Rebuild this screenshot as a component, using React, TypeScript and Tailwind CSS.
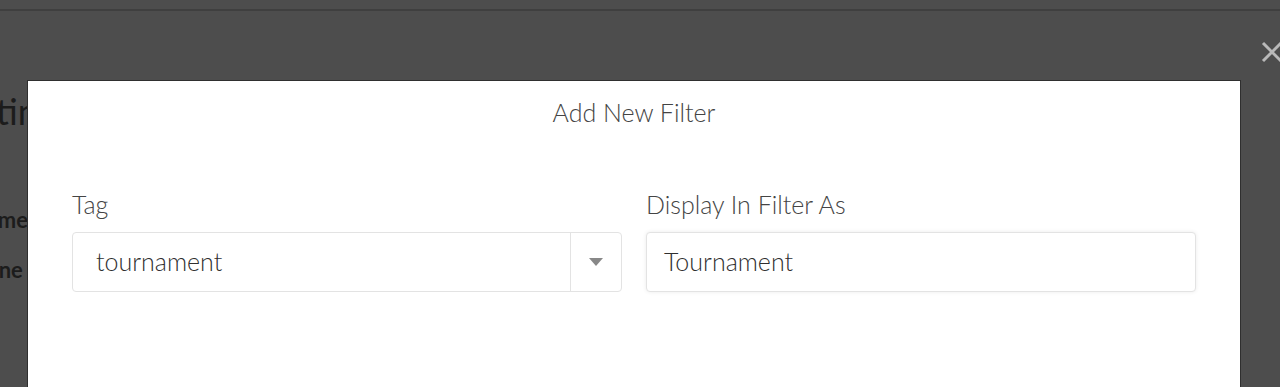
export default function App() {
  return (
    <div className="relative h-[387px] w-[1280px] overflow-hidden bg-[#4d4d4d] font-['Lato','Noto_Sans',sans-serif]">
      {/* page behind the overlay */}
      <div className="h-[9px]" />
      <div className="h-[2px] bg-[#3f3f3f]" />
      <div className="pt-[80px] text-[#1c1c1c]">
        <div className="ml-[-54px] whitespace-nowrap text-[36px] leading-[40px]">Setting</div>
        <div className="ml-[-30px] mt-[75px] whitespace-nowrap text-[22px] font-bold leading-[28px]">Name</div>
        <div className="ml-[-40px] mt-[22px] whitespace-nowrap text-[22px] font-bold leading-[28px]">Phone</div>
      </div>

      {/* close */}
      <button className="absolute left-[1261px] top-[41px] text-[#b9b9b9]">
        <svg width="22" height="22" viewBox="0 0 22 22" fill="none" stroke="currentColor" strokeWidth="3">
          <path d="M2 2L20 20M20 2L2 20" />
        </svg>
      </button>

      {/* modal */}
      <div className="absolute left-[28px] top-[81px] h-[320px] w-[1212px] bg-white px-[44px] outline outline-1 outline-[#2f2f2f]">
        <h2 className="pt-[15px] text-center text-[25px] font-light leading-[32px] text-[#444]">Add New Filter</h2>
        <div className="mt-[61px] grid grid-cols-2 gap-[24px]">
          <div>
            <label className="block text-[25px] font-light leading-[30px] text-[#444]">Tag</label>
            <div className="mt-[13px] flex h-[60px] items-stretch rounded-[4px] border border-[#e3e3e3] bg-white">
              <div className="flex flex-1 items-center pl-[23px] text-[25px] font-light text-[#2f2f2f]">tournament</div>
              <div className="flex w-[51px] items-center justify-center border-l border-[#e3e3e3]">
                <svg width="14" height="8" viewBox="0 0 14 8">
                  <path d="M0 0H14L7 8Z" fill="#888" />
                </svg>
              </div>
            </div>
          </div>
          <div>
            <label className="block text-[25px] font-light leading-[30px] text-[#444]">Display In Filter As</label>
            <div className="mt-[13px] flex h-[60px] items-center rounded-[4px] border border-[#e3e3e3] bg-white pl-[17px] text-[25px] font-light text-[#2f2f2f] shadow-[0_0_4px_rgba(0,0,0,0.08)]">
              Tournament
            </div>
          </div>
        </div>
      </div>
    </div>
  )
}
